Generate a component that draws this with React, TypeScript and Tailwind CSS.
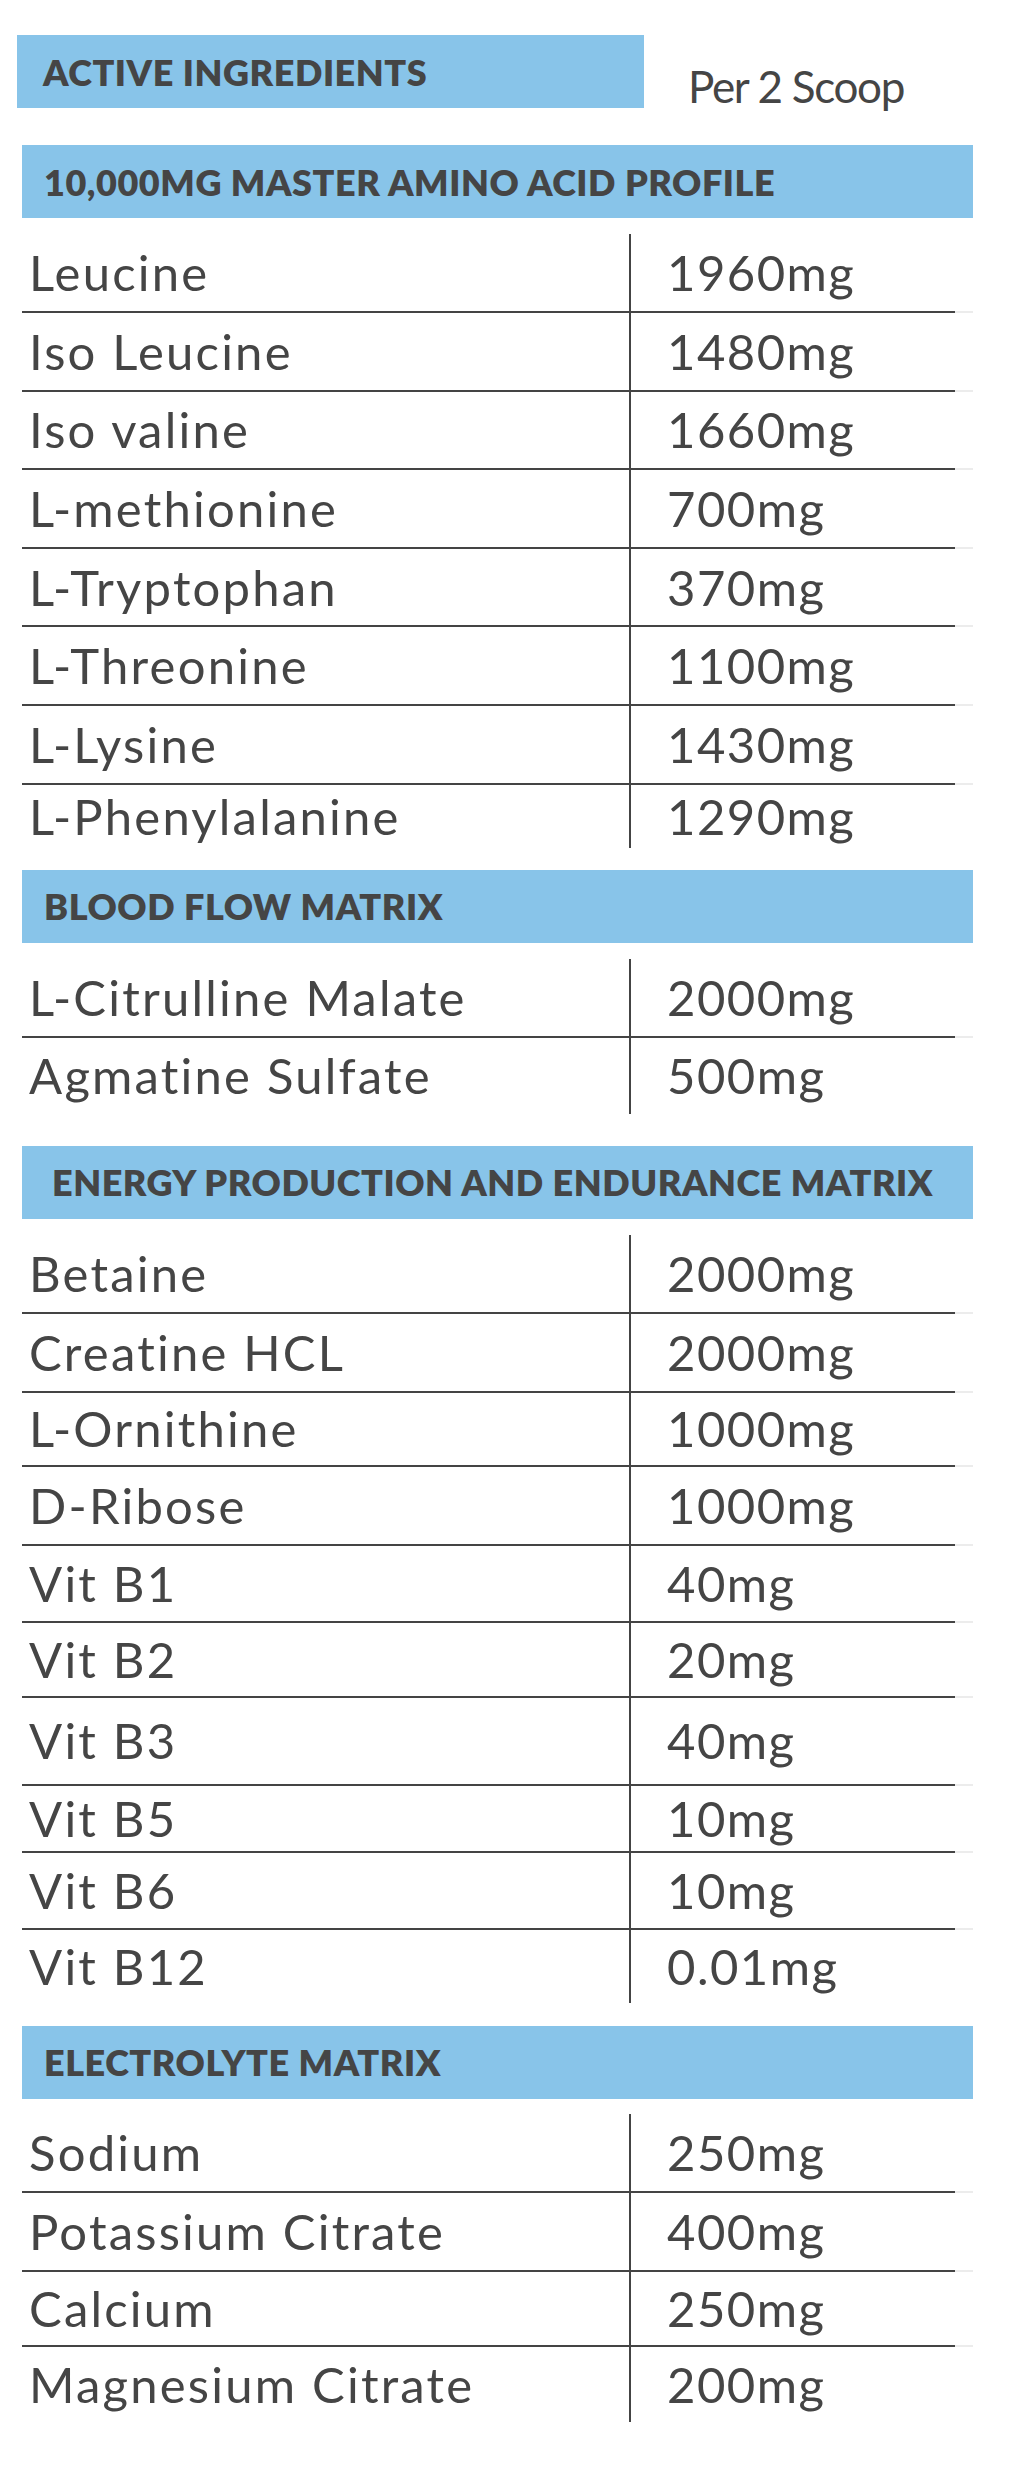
import React from 'react';

type Row = { name: string; amount: string; h: string };

type Section = {
  title: string;
  gap: string;
  tableGap: string;
  pad: string;
  rows: Row[];
};

const SECTIONS: Section[] = [
  {
    title: '10,000MG MASTER AMINO ACID PROFILE',
    gap: 'mt-[37px]',
    tableGap: 'mt-[16px]',
    pad: 'pl-[22px]',
    rows: [
      { name: 'Leucine', amount: '1960mg', h: 'h-[77px]' },
      { name: 'Iso Leucine', amount: '1480mg', h: 'h-[76.6px]' },
      { name: 'Iso valine', amount: '1660mg', h: 'h-[76.6px]' },
      { name: 'L-methionine', amount: '700mg', h: 'h-[76.6px]' },
      { name: 'L-Tryptophan', amount: '370mg', h: 'h-[76.6px]' },
      { name: 'L-Threonine', amount: '1100mg', h: 'h-[76.6px]' },
      { name: 'L-Lysine', amount: '1430mg', h: 'h-[76.6px]' },
      { name: 'L-Phenylalanine', amount: '1290mg', h: 'h-[63px]' },
    ],
  },
  {
    title: 'BLOOD FLOW MATRIX',
    gap: 'mt-[22px]',
    tableGap: 'mt-[16px]',
    pad: 'pl-[22px]',
    rows: [
      { name: 'L-Citrulline Malate', amount: '2000mg', h: 'h-[77px]' },
      { name: 'Agmatine Sulfate', amount: '500mg', h: 'h-[76px]' },
    ],
  },
  {
    title: 'ENERGY PRODUCTION AND ENDURANCE MATRIX',
    gap: 'mt-[32px]',
    tableGap: 'mt-[16px]',
    pad: 'pl-[30px]',
    rows: [
      { name: 'Betaine', amount: '2000mg', h: 'h-[77px]' },
      { name: 'Creatine HCL', amount: '2000mg', h: 'h-[77px]' },
      { name: 'L-Ornithine', amount: '1000mg', h: 'h-[72px]' },
      { name: 'D-Ribose', amount: '1000mg', h: 'h-[77px]' },
      { name: 'Vit B1', amount: '40mg', h: 'h-[75px]' },
      { name: 'Vit B2', amount: '20mg', h: 'h-[73px]' },
      { name: 'Vit B3', amount: '40mg', h: 'h-[86px]' },
      { name: 'Vit B5', amount: '10mg', h: 'h-[65px]' },
      { name: 'Vit B6', amount: '10mg', h: 'h-[75px]' },
      { name: 'Vit B12', amount: '0.01mg', h: 'h-[73px]' },
    ],
  },
  {
    title: 'ELECTROLYTE MATRIX',
    gap: 'mt-[23px]',
    tableGap: 'mt-[15px]',
    pad: 'pl-[22px]',
    rows: [
      { name: 'Sodium', amount: '250mg', h: 'h-[77px]' },
      { name: 'Potassium Citrate', amount: '400mg', h: 'h-[77px]' },
      { name: 'Calcium', amount: '250mg', h: 'h-[73px]' },
      { name: 'Magnesium Citrate', amount: '200mg', h: 'h-[75px]' },
    ],
  },
];

function Divider() {
  return (
    <div className="flex h-[2px]">
      <div className="w-[933px] bg-[#444444]" />
      <div className="w-[18px] bg-[#ececec]" />
    </div>
  );
}

function Table({ rows, className }: { rows: Row[]; className: string }) {
  return (
    <div className={`ml-[22px] w-[951px] ${className}`}>
      {rows.map((r, i) => (
        <React.Fragment key={r.name}>
          {i > 0 && <Divider />}
          <div className={`flex ${r.h}`}>
            <div className="flex w-[609px] items-center border-r-2 border-[#444444] pl-[7px] tracking-[0.045em]">
              {r.name}
            </div>
            <div className="flex items-center pl-[36px] tracking-[0.03em]">{r.amount}</div>
          </div>
        </React.Fragment>
      ))}
    </div>
  );
}

export default function App() {
  return (
    <div className="min-h-screen w-[1024px] bg-white pt-[35px] pb-[48px] font-['Lato',sans-serif] text-[49px] leading-none text-[#454545]">
      {/* top label row */}
      <div className="flex h-[73px] items-start">
        <div className="ml-[17px] flex h-[73px] w-[627px] items-center bg-[#88c4e9] pl-[26px] text-[36px] font-extrabold tracking-[0.015em]">
          ACTIVE INGREDIENTS
        </div>
        <div className="ml-[44px] mt-[29px] text-[44px] font-normal tracking-[-0.03em]">Per 2 Scoop</div>
      </div>

      {SECTIONS.map((s) => (
        <React.Fragment key={s.title}>
          <div
            className={`ml-[22px] flex h-[73px] w-[951px] items-center bg-[#88c4e9] text-[36px] font-extrabold tracking-[0.015em] ${s.pad} ${s.gap}`}
          >
            {s.title}
          </div>
          <Table rows={s.rows} className={s.tableGap} />
        </React.Fragment>
      ))}
    </div>
  );
}
